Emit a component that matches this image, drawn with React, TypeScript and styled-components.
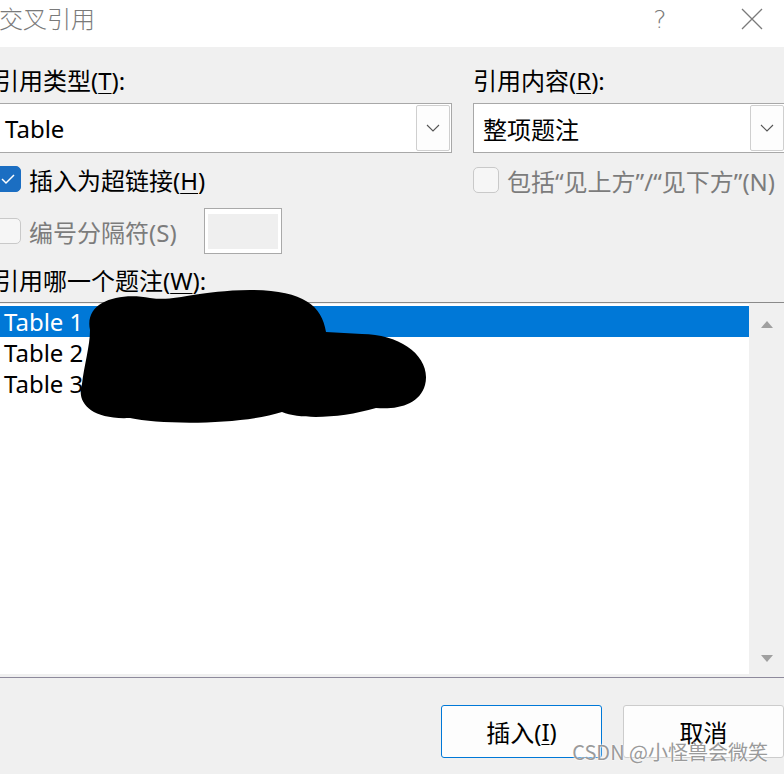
import React from "react";
import styled, { createGlobalStyle } from "styled-components";

const Global = createGlobalStyle`
  html, body { margin: 0; padding: 0; background: #f0f0f0; overflow: hidden; }
  body { font-family: "Noto Sans", "Noto Sans CJK SC", sans-serif; }
  * { box-sizing: border-box; }
`;

const Window = styled.div`
  position: relative;
  width: 784px;
  height: 774px;
  overflow: hidden;
  background: #f0f0f0;
  display: flex;
  flex-direction: column;
`;

const TitleBar = styled.div`
  height: 47px;
  background: #ffffff;
  display: flex;
  align-items: center;
  padding-right: 10px;
  padding-bottom: 9px;
  flex-shrink: 0;
`;

const TitleText = styled.div`
  flex: 1;
  margin-left: -1px;
  font-size: 24px;
  font-weight: 300;
  color: #7a7a7a;
  line-height: 30px;
`;

const TitleButton = styled.div<{ $w: number }>`
  width: ${(p) => p.$w}px;
  height: 36px;
  display: flex;
  align-items: center;
  justify-content: center;
  color: #7a7a7a;
  font-size: 25px;
  font-weight: 300;
  font-family: "DejaVu Sans", sans-serif;
`;

const TitleGap = styled.div`
  width: 50px;
`;

const Content = styled.div`
  margin-left: -5px;
  width: 789px;
  display: flex;
  flex-direction: column;
  flex: 1;
`;

const TopGrid = styled.div`
  display: grid;
  grid-template-columns: 457px 313px;
  column-gap: 21px;
  margin-top: 19px;
`;

const Column = styled.div`
  display: flex;
  flex-direction: column;
`;

const Label = styled.div`
  font-size: 24px;
  line-height: 30px;
  height: 30px;
  color: #000;
  white-space: nowrap;
`;

const Key = styled.span`
  text-decoration: underline;
  text-underline-offset: 3px;
  text-decoration-thickness: 1px;
`;

const Combo = styled.div`
  margin-top: 7px;
  height: 50px;
  border: 1px solid #a8a8a8;
  background: #ffffff;
  display: flex;
  align-items: stretch;
  padding: 1px;
`;

const ComboValue = styled.div`
  flex: 1;
  display: flex;
  align-items: center;
  padding-left: 8px;
  font-size: 24px;
  color: #000;
`;

const ComboButton = styled.div`
  width: 34px;
  border: 1px solid #cfcfcf;
  border-radius: 2px;
  background: #fdfdfd;
  display: flex;
  align-items: center;
  justify-content: center;
`;

const CheckRow = styled.div<{ $top: number; $h: number }>`
  margin-top: ${(p) => p.$top}px;
  height: ${(p) => p.$h}px;
  display: flex;
  align-items: center;
  white-space: nowrap;
`;

const CheckBox = styled.div<{ $checked?: boolean }>`
  width: 26px;
  height: 26px;
  border-radius: 5px;
  flex-shrink: 0;
  display: flex;
  align-items: center;
  justify-content: center;
  background: ${(p) => (p.$checked ? "#1b6ec2" : "#f6f6f6")};
  border: 1px solid ${(p) => (p.$checked ? "#1b6ec2" : "#c9c9c9")};
`;

const CheckText = styled.span<{ $disabled?: boolean }>`
  margin-left: 8px;
  font-size: 24px;
  line-height: 30px;
  padding-top: 3px;
  color: ${(p) => (p.$disabled ? "#7c7c7c" : "#000")};
`;

const SeparatorBox = styled.div`
  margin-left: 27px;
  width: 78px;
  height: 46px;
  border: 1px solid #a9a9a9;
  background: #ffffff;
  padding: 5px 3px 4px 3px;
`;

const SeparatorFill = styled.div`
  width: 100%;
  height: 100%;
  background: #efefef;
`;

const ListLabel = styled(Label)`
  margin-top: 12px;
`;

const ListFrame = styled.div`
  margin-top: 6px;
  height: 376px;
  border-top: 1px solid #8a8a8a;
  border-bottom: 1px solid #8e8a9c;
  padding: 1px 0 3px 0;
  display: flex;
`;

const ListArea = styled.div`
  flex: 1;
  background: #ffffff;
  padding-top: 2px;
  display: flex;
  flex-direction: column;
`;

const ListRow = styled.div<{ $selected?: boolean }>`
  height: 31px;
  display: flex;
  align-items: center;
  padding-left: 9px;
  font-size: 24px;
  color: ${(p) => (p.$selected ? "#ffffff" : "#000")};
  background: ${(p) => (p.$selected ? "#0078d7" : "transparent")};
`;

const Scrollbar = styled.div`
  width: 35px;
  background: #f0f0f0;
  display: flex;
  flex-direction: column;
  justify-content: space-between;
  align-items: center;
  padding: 16px 0 11px 0;
`;

const Footer = styled.div`
  margin-top: 27px;
  display: flex;
  justify-content: flex-end;
  gap: 21px;
`;

const Button = styled.div<{ $primary?: boolean }>`
  width: 161px;
  height: 53px;
  border-radius: 3px;
  background: #fdfdfd;
  border: 1px solid ${(p) => (p.$primary ? "#0078d7" : "#cccccc")};
  display: flex;
  align-items: center;
  justify-content: center;
  font-size: 24px;
  color: #000;
`;

const Watermark = styled.div`
  position: absolute;
  right: 16px;
  bottom: 8px;
  font-size: 20px;
  color: #9a9a9a;
  font-family: "Noto Sans CJK SC", sans-serif;
  text-shadow: 0 0 2px #fff, 0 0 2px #fff;
  white-space: nowrap;
`;

const Redaction = styled.svg`
  position: absolute;
  left: 0;
  top: 0;
  pointer-events: none;
`;

const Chevron = () => (
  <svg width="14" height="8" viewBox="0 0 14 8">
    <path d="M1 1 L7 7 L13 1" fill="none" stroke="#555" strokeWidth="1.1" />
  </svg>
);

const Check = () => (
  <svg width="16" height="12" viewBox="0 0 16 12">
    <path d="M2 6 L6 10 L14 2" fill="none" stroke="#fff" strokeWidth="1.5" />
  </svg>
);

const Arrow = ({ up }: { up?: boolean }) => (
  <svg width="12" height="8" viewBox="0 0 12 8">
    <path d={up ? "M0 8 L6 1 L12 8 Z" : "M0 0 L12 0 L6 7 Z"} fill="#a0a0a0" />
  </svg>
);

export default function App() {
  return (
    <>
      <Global />
      <Window>
        <TitleBar>
          <TitleText>交叉引用</TitleText>
          <TitleButton $w={40}>?</TitleButton>
          <TitleGap />
          <TitleButton $w={44}>
            <svg width="22" height="22" viewBox="0 0 22 22">
              <path d="M1 1 L21 21 M21 1 L1 21" stroke="#7a7a7a" strokeWidth="1.3" />
            </svg>
          </TitleButton>
        </TitleBar>
        <Content>
          <TopGrid>
            <Column>
              <Label>
                引用类型(<Key>T</Key>):
              </Label>
              <Combo>
                <ComboValue>Table</ComboValue>
                <ComboButton>
                  <Chevron />
                </ComboButton>
              </Combo>
              <CheckRow $top={13} $h={26}>
                <CheckBox $checked>
                  <Check />
                </CheckBox>
                <CheckText>
                  插入为超链接(<Key>H</Key>)
                </CheckText>
              </CheckRow>
              <CheckRow $top={16} $h={46}>
                <CheckBox />
                <CheckText $disabled>编号分隔符(S)</CheckText>
                <SeparatorBox>
                  <SeparatorFill />
                </SeparatorBox>
              </CheckRow>
            </Column>
            <Column>
              <Label>
                引用内容(<Key>R</Key>):
              </Label>
              <Combo>
                <ComboValue>整项题注</ComboValue>
                <ComboButton>
                  <Chevron />
                </ComboButton>
              </Combo>
              <CheckRow $top={14} $h={26}>
                <CheckBox />
                <CheckText $disabled>包括“见上方”/“见下方”(N)</CheckText>
              </CheckRow>
            </Column>
          </TopGrid>
          <ListLabel>
            引用哪一个题注(<Key>W</Key>):
          </ListLabel>
          <ListFrame>
            <ListArea>
              <ListRow $selected>Table 1</ListRow>
              <ListRow>Table 2</ListRow>
              <ListRow>Table 3</ListRow>
            </ListArea>
            <Scrollbar>
              <Arrow up />
              <Arrow />
            </Scrollbar>
          </ListFrame>
          <Footer>
            <Button $primary>
              插入(<Key>I</Key>)
            </Button>
            <Button>取消</Button>
          </Footer>
        </Content>
        <Redaction width="784" height="774" viewBox="0 0 784 774">
          <path
            d="M90 330 C84 302 118 292 150 298 C178 302 190 291 250 290 C302 290 322 305 326 332 L362 334 C402 334 432 358 425 385 C420 404 398 410 376 408 C342 418 302 420 282 412 C242 425 162 425 130 418 C90 420 76 402 82 384 C84 366 90 346 90 330 Z"
            fill="#000"
          />
        </Redaction>
        <Watermark>CSDN @小怪兽会微笑</Watermark>
      </Window>
    </>
  );
}
